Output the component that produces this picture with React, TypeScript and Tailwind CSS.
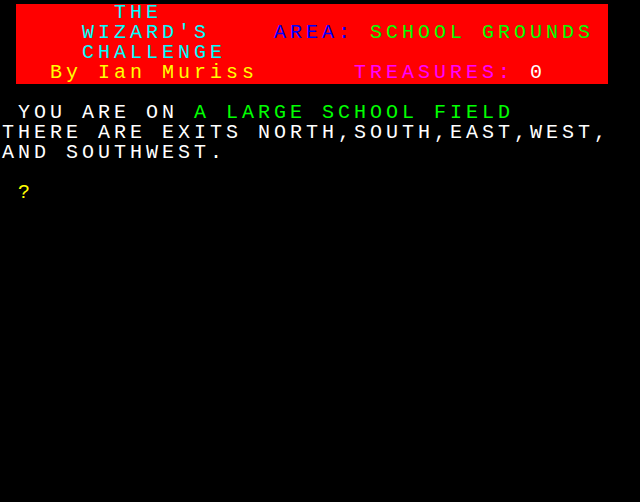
type Seg = { t: string; c?: string };

// One teletext row: 40 cells, 16px x 20px each
function Row({ segs }: { segs: Seg[] }) {
  return (
    <div className="h-[20px] whitespace-pre pl-[2px] text-[20px] leading-[18px] tracking-[4px]">
      {segs.map((s, i) => (
        <span key={i} className={s.c ?? 'text-white'}>
          {s.t}
        </span>
      ))}
    </div>
  );
}

const cyan = 'text-[#00ffff]';
const blue = 'text-[#0000ff]';
const green = 'text-[#00ff00]';
const yellow = 'text-[#ffff00]';
const magenta = 'text-[#ff00ff]';

export default function App() {
  return (
    <div
      className="h-[502px] w-[640px] overflow-hidden bg-black pt-[4px] text-white"
      style={{ fontFamily: '"Liberation Mono", "DejaVu Sans Mono", monospace' }}
    >
      <div className="ml-[16px] w-[592px] bg-[#ff0000]">
        <Row segs={[{ t: '      THE', c: cyan }]} />
        <Row
          segs={[
            { t: '    WIZARD\'S', c: cyan },
            { t: '    AREA:', c: blue },
            { t: ' SCHOOL GROUNDS', c: green },
          ]}
        />
        <Row segs={[{ t: '    CHALLENGE', c: cyan }]} />
        <Row
          segs={[
            { t: '  By Ian Muriss', c: yellow },
            { t: '      TREASURES:', c: magenta },
            { t: ' 0' },
          ]}
        />
      </div>
      <Row segs={[{ t: '' }]} />
      <Row segs={[{ t: ' YOU ARE ON ' }, { t: 'A LARGE SCHOOL FIELD', c: green }]} />
      <Row segs={[{ t: 'THERE ARE EXITS NORTH,SOUTH,EAST,WEST,' }]} />
      <Row segs={[{ t: 'AND SOUTHWEST.' }]} />
      <Row segs={[{ t: '' }]} />
      <Row segs={[{ t: ' ?', c: yellow }]} />
    </div>
  );
}
